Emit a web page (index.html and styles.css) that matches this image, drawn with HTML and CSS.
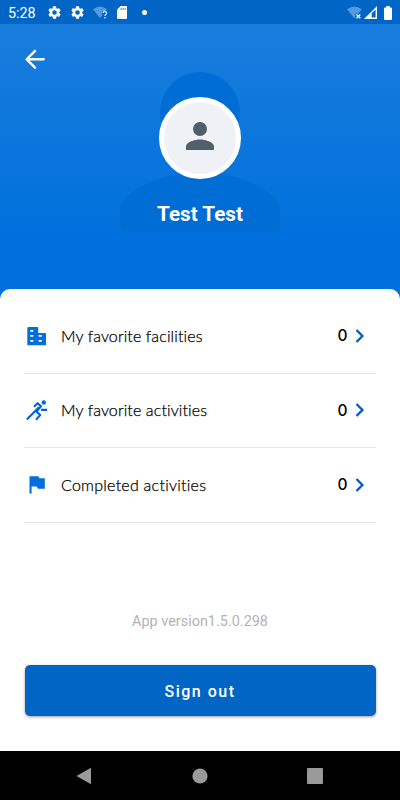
FILE: index.html
```html
<!DOCTYPE html>
<html lang="en">
<head>
<meta charset="utf-8">
<title>Profile</title>
<link rel="stylesheet" href="styles.css">
</head>
<body>
<svg class="defs" width="0" height="0">
  <symbol id="gear" viewBox="2 2 20 20"><path fill-rule="evenodd" d="M19.14 12.94c.04-.3.06-.61.06-.94s-.02-.64-.07-.94l2.03-1.58c.18-.14.23-.41.12-.61l-1.92-3.32c-.12-.22-.37-.29-.59-.22l-2.39.96c-.5-.38-1.03-.7-1.62-.94L14.4 2.81A.47.47 0 0 0 13.92 2.4h-3.84c-.24 0-.43.17-.47.41l-.36 2.54c-.59.24-1.13.57-1.62.94l-2.39-.96c-.22-.08-.47 0-.59.22L2.74 8.87c-.12.21-.08.47.12.61l2.03 1.58c-.05.3-.09.63-.09.94s.02.64.07.94l-2.03 1.58c-.18.14-.23.41-.12.61l1.92 3.32c.12.22.37.29.59.22l2.39-.96c.5.38 1.03.7 1.62.94l.36 2.54c.05.24.24.41.48.41h3.84c.24 0 .44-.17.47-.41l.36-2.54c.59-.24 1.13-.56 1.62-.94l2.39.96c.22.08.47 0 .59-.22l1.92-3.32c.12-.22.07-.47-.12-.61zM12 15.600a3.600 3.600 0 1 1 0-7.200 3.600 3.600 0 0 1 0 7.200z"/></symbol>
  <symbol id="chevron" viewBox="0 0 10 16"><path d="M1.500 2 7.400 8l-5.900 6" fill="none" stroke="#0059c8" stroke-width="2.300"/></symbol>
</svg>
<main class="screen">
  <header class="status">
    <span class="time">5:28</span>
    <svg class="gear" width="13" height="13"><use href="#gear"/></svg>
    <svg class="gear second" width="13" height="13"><use href="#gear"/></svg>
    <svg class="wifi" width="15" height="14" viewBox="0 0 15 14"><path d="M0 3.200Q7-2.200 14 3.200L12.200 5.200H9.200V9.700L7 12z" fill="#5599dc"/><path d="M10.200 7c.1-2.200 3.500-2 3.400 0 0 1.400-1.700 1.400-1.700 3M11.900 11v1.400" fill="none" stroke="#fff" stroke-width="1.100"/></svg>
    <svg class="sd" width="10" height="13" viewBox="0 0 10 13"><path fill-rule="evenodd" d="M3.600 0H9a1 1 0 0 1 1 1v11a1 1 0 0 1-1 1H1a1 1 0 0 1-1-1V3.700zM3.700 1.900v2.200h.8V1.900zm2 0v2.200h.8V1.900zm2 0v2.200h.8V1.900z"/></svg>
    <span class="dot"></span>
    <svg class="wifi-right" width="15" height="14" viewBox="0 0 15 14"><path d="M0 3.200Q7.400-2.400 14.800 3.200L11.400 7.500H8.500v3.200l-1.100 1.500z" fill="#5599dc"/><path d="m9.500 8.500 3.800 3.800m0-3.800-3.800 3.800" stroke="#fff" stroke-width="1.300"/></svg>
    <svg class="signal" width="13" height="13" viewBox="0 0 13 13"><path fill-rule="evenodd" d="M13 0v13H0zM11.600 3.400 7.700 7.300v4.300h3.900z"/></svg>
    <svg class="battery" width="8" height="14" viewBox="0 0 8 14"><path d="M2.300 0h3.400v1.400H7a1 1 0 0 1 1 1V13a1 1 0 0 1-1 1H1a1 1 0 0 1-1-1V2.400a1 1 0 0 1 1-1h1.300z"/></svg>
  </header>
  <section class="hero">
    <svg class="silhouette" width="160" height="160" viewBox="0 0 160 160"><circle cx="80" cy="40" r="40"/><path d="M80 100c-26.700 0-80 13.400-80 40v14q0 6 6 6h148q6 0 6-6v-14c0-26.600-53.300-40-80-40z"/></svg>
    <svg class="back" width="20" height="20" viewBox="0 0 20 20"><path d="M18.600 10.300H2M10 1.900 1.700 10.300l8.300 8.400" fill="none" stroke="#fff" stroke-width="2.400" stroke-linecap="round" stroke-linejoin="round"/></svg>
    <div class="avatar"><svg width="42" height="42" viewBox="0 0 24 24"><path d="M12 12a4 4 0 1 0 0-8 4 4 0 0 0 0 8zm0 2c-2.670 0-8 1.340-8 4v1.500q0 .5.500.5h15q.5 0 .5-.5V18c0-2.660-5.330-4-8-4z"/></svg></div>
    <h1>Test Test</h1>
  </section>
  <section class="sheet">
    <ul class="list">
      <li><svg class="icon" width="24" height="24" viewBox="0 0 24 24"><path fill="#006edb" fill-rule="evenodd" d="M4.500 3h8.700q1 0 1 1v5h6.800q1 0 1 1v11.300H3.300V4q0-1 1.200-1zM6.300 6v1.700h3V6zm0 5v1.700h3V11zm0 5v1.700h3V16zm8.400-5v1.700h3V11zm0 5v1.700h3V16z"/></svg><span class="label facilities">My favorite facilities</span><b>0</b><svg width="10" height="16"><use href="#chevron"/></svg></li>
      <li><svg class="icon" width="24" height="24" viewBox="0 0 24 24"><circle cx="19.800" cy="4.500" r="2.200" fill="#006edb"/><path d="m2.800 21.600 12.200-12.400M10 8.800l3.600-3.600 3.400 3-4.600 5.400 3.800 3.500-4.200 4.600M17 11.900h6" fill="none" stroke="#0064d2" stroke-width="2.100" stroke-linejoin="round"/></svg><span class="label activities">My favorite activities</span><b>0</b><svg width="10" height="16"><use href="#chevron"/></svg></li>
      <li><svg class="icon" width="24" height="24" viewBox="0 0 24 24"><path fill="#006edb" d="M5.500 3.300h8.900l1 2h5.400v10.400h-6.800l-1.300-2.200H7.600v7H5.500z"/></svg><span class="label completed">Completed activities</span><b>0</b><svg width="10" height="16"><use href="#chevron"/></svg></li>
    </ul>
    <p class="version">App version1.5.0.298</p>
    <button class="signout" type="button">Sign out</button>
  </section>
  <nav class="nav">
    <svg width="16" height="18" viewBox="0 0 16 18"><path d="M15 .7v16.600L.5 9z"/></svg>
    <svg width="16" height="16" viewBox="0 0 16 16"><circle cx="8" cy="8" r="7.600"/></svg>
    <svg width="16" height="16" viewBox="0 0 16 16"><rect width="16" height="16" rx="1"/></svg>
  </nav>
</main>
</body>
</html>
```
FILE: styles.css
```css
* { box-sizing: border-box; }
body { margin: 0; font-family: Roboto, sans-serif; }
svg { display: block; flex: none; }
.defs { position: absolute; }
.screen { width: 400px; height: 800px; display: flex; flex-direction: column; overflow: hidden; background: #0070dc; }
.status { height: 24px; flex: none; display: flex; align-items: center; padding: 1px 8px 0; background: #0065c5; fill: #fff; color: #fff; }
.time { width: 39.500px; font-size: 14.300px; line-height: 24px; }
.gear.second { margin-left: 10px; }
.wifi { margin-left: 9px; }
.sd { margin-left: 9px; }
.dot { width: 5px; height: 5px; margin-left: 15px; border-radius: 50%; background: #fff; }
.wifi-right { margin-left: auto; }
.signal { margin-left: 2px; }
.battery { margin-left: 7px; }
.hero { height: 278px; flex: none; display: flex; flex-direction: column; align-items: center; position: relative; background: linear-gradient(#197ddd, #0070dc 78%); }
.silhouette { position: absolute; top: 48px; left: 120px; fill: #006dd5; }
.back { align-self: flex-start; margin: 25px 0 0 25px; }
.avatar { position: relative; width: 82px; height: 82px; margin-top: 28px; padding-bottom: 4px; display: flex; align-items: center; justify-content: center; border: 5px solid #fff; border-radius: 50%; background: #eef2f6; fill: #505f69; }
h1 { position: relative; margin: 23px 0 0; font-size: 20.700px; line-height: 24px; font-weight: 700; color: #fff; }
.sheet { height: 462px; flex: none; margin-top: -13px; padding: 10px 24px 0; position: relative; border-radius: 10px 10px 0 0; background: #fff; }
.list { margin: 0; padding: 0; list-style: none; }
.list li { height: 74.500px; display: flex; align-items: center; border-bottom: 1px solid #e6e6e6; }
.label { margin-left: 13px; padding-bottom: 1px; flex: 1; font-family: Lato, sans-serif; font-size: 16px; font-weight: 300; -webkit-text-stroke: .25px #000; font-variant-ligatures: none; letter-spacing: .12px; color: #000; white-space: nowrap; }
.completed { letter-spacing: .25px; }
.list b { width: 11px; padding-top: 1px; font: 500 15.500px/20px Inter, sans-serif; color: #000; text-align: center; }
.list b + svg { margin: 0 11px 0 7px; }
.version { margin: 90px 0 0; text-align: center; font-size: 14.450px; line-height: 18px; color: #b3b3b3; }
.signout { display: block; width: 351px; height: 51px; margin: 34.500px 0 0 .5px; padding: 2px 0 0; border: 0; border-radius: 5px; background: #0065c5; box-shadow: 0 1px 3px #0006; color: #fff; font: 500 16px/20px Roboto, sans-serif; letter-spacing: 1.500px; }
.nav { height: 49px; flex: none; display: flex; align-items: center; justify-content: space-between; padding: 0 77px 0 76px; background: #000; fill: #999; }
```
